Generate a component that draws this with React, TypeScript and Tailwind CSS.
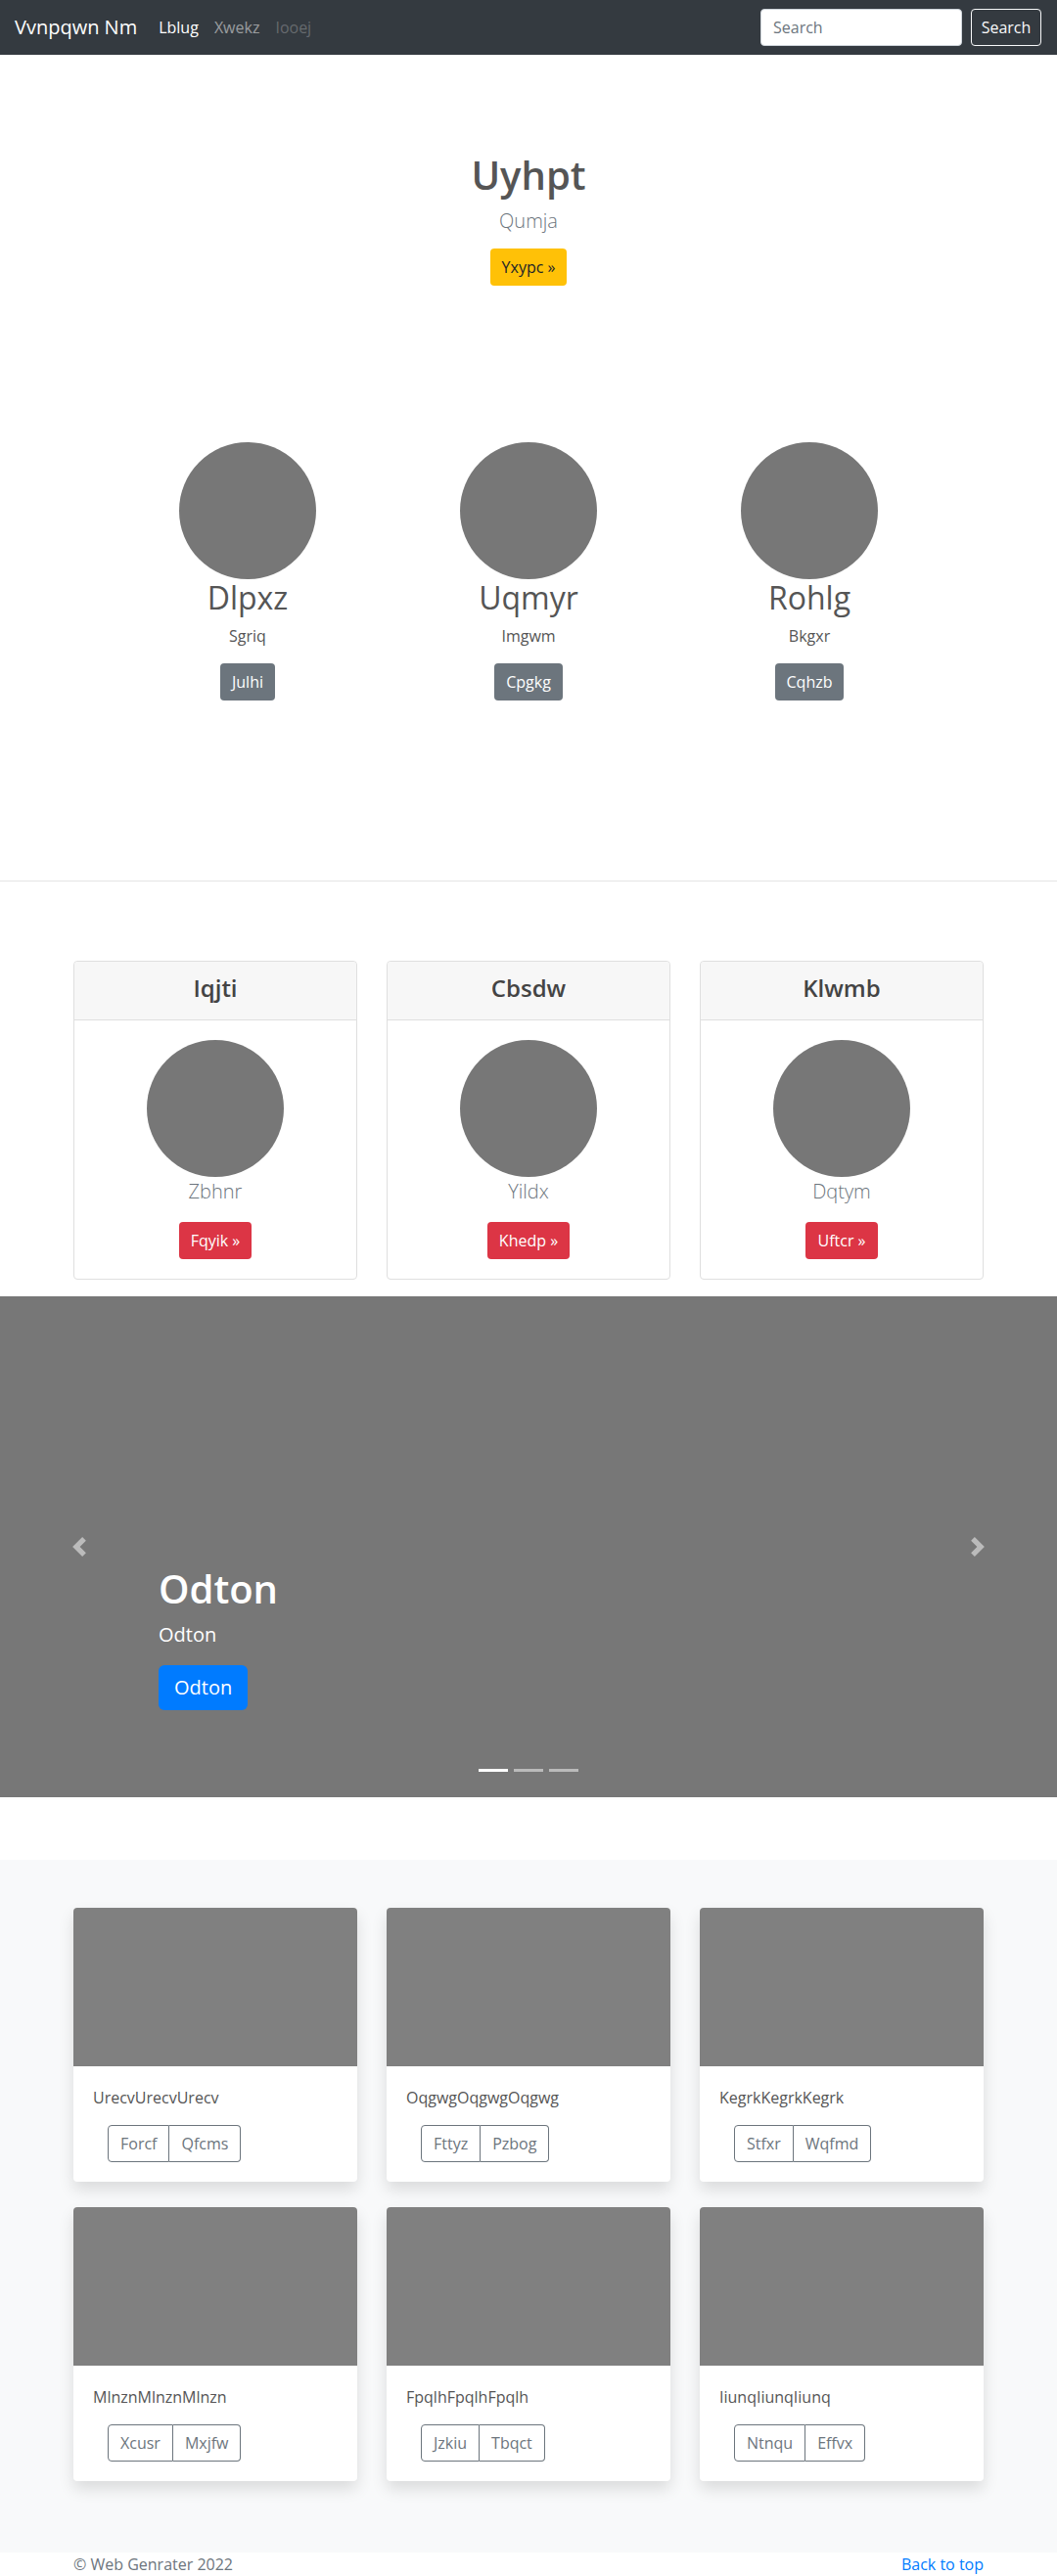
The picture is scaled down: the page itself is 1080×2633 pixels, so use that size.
import React from "react";

const circles = [
  { t: "Dlpxz", s: "Sgriq", b: "Julhi" },
  { t: "Uqmyr", s: "Imgwm", b: "Cpgkg" },
  { t: "Rohlg", s: "Bkgxr", b: "Cqhzb" },
];

const cards = [
  { h: "Iqjti", s: "Zbhnr", b: "Fqyik »" },
  { h: "Cbsdw", s: "Yildx", b: "Khedp »" },
  { h: "Klwmb", s: "Dqtym", b: "Uftcr »" },
];

const album = [
  { t: "UrecvUrecvUrecv", a: "Forcf", b: "Qfcms" },
  { t: "OqgwgOqgwgOqgwg", a: "Fttyz", b: "Pzbog" },
  { t: "KegrkKegrkKegrk", a: "Stfxr", b: "Wqfmd" },
  { t: "MlnznMlnznMlnzn", a: "Xcusr", b: "Mxjfw" },
  { t: "FpqlhFpqlhFpqlh", a: "Jzkiu", b: "Tbqct" },
  { t: "IiunqIiunqIiunq", a: "Ntnqu", b: "Effvx" },
];

export default function App() {
  return (
    <div className="bg-white text-[#212529] font-['Open_Sans','Noto_Sans',sans-serif] text-base leading-6">
      {/* Navbar */}
      <nav className="h-14 bg-[#343a40] flex items-center pl-[15px] pr-4">
        <span className="text-[20px] leading-[30px] text-white mr-[14px]">Vvnpqwn Nm</span>
        <div className="flex">
          <a className="px-2 text-white">Lblug</a>
          <a className="px-2 text-white/50">Xwekz</a>
          <a className="px-2 text-white/25">Iooej</a>
        </div>
        <div className="ml-auto flex items-center gap-[9px]">
          <input
            placeholder="Search"
            className="w-[206px] h-[38px] rounded bg-white px-3 border border-[#ced4da] text-[#495057] placeholder:text-[#6c757d] outline-none"
          />
          <button className="h-[38px] w-[72px] rounded border border-[#f8f9fa] text-[#f8f9fa]">Search</button>
        </div>
      </nav>

      {/* Hero */}
      <section className="pt-[99px] text-center">
        <h1 className="text-[40px] leading-[48px] font-semibold text-[#555] mb-2">Uyhpt</h1>
        <p className="text-[20px] leading-[30px] font-light text-[#6c757d] mb-[13px]">Qumja</p>
        <button className="h-[38px] px-3 rounded bg-[#ffc107] text-[#212529]">Yxypc »</button>
      </section>

      {/* Circles */}
      <div className="mt-[160px] w-[861px] mx-auto grid grid-cols-3 text-center">
        {circles.map((c) => (
          <div key={c.t} className="flex flex-col items-center">
            <div className="w-[140px] h-[140px] rounded-full bg-[#777]" />
            <h2 className="text-[32px] leading-[38px] font-normal text-[#555] mb-2">{c.t}</h2>
            <p className="text-[#555] mb-4">{c.s}</p>
            <button className="h-[38px] px-3 rounded bg-[#6c757d] text-white">{c.b}</button>
          </div>
        ))}
      </div>

      <hr className="mt-[184px] border-0 border-t border-[#e5e5e5]" />

      {/* Pricing-like cards */}
      <div className="mt-[81px] w-[930px] mx-auto grid grid-cols-3 gap-[30px] text-center">
        {cards.map((c) => (
          <div key={c.h} className="border border-[#dfdfdf] rounded">
            <div className="bg-[#f7f7f7] border-b border-[#dfdfdf] pt-3 pb-[18px] rounded-t">
              <h4 className="text-[24px] leading-[29px] font-semibold text-[#444]">{c.h}</h4>
            </div>
            <div className="p-5 flex flex-col items-center">
              <div className="w-[140px] h-[140px] rounded-full bg-[#777]" />
              <p className="text-[20px] leading-[30px] font-light text-[#6c757d] mb-4">{c.s}</p>
              <button className="h-[38px] px-3 rounded bg-[#dc3545] text-white">{c.b}</button>
            </div>
          </div>
        ))}
      </div>

      {/* Carousel */}
      <div className="mt-[17px] relative h-[512px] bg-[#777]">
        <svg className="absolute left-[71px] top-[246px] w-5 h-5 opacity-50" viewBox="0 0 8 8" fill="#fff">
          <path d="M5.25 0l-4 4 4 4 1.5-1.5L4.25 4l2.5-2.5L5.25 0z" />
        </svg>
        <svg className="absolute right-[71px] top-[246px] w-5 h-5 opacity-50" viewBox="0 0 8 8" fill="#fff">
          <path d="M2.75 0l-1.5 1.5L3.75 4l-2.5 2.5L2.75 8l4-4-4-4z" />
        </svg>
        <div className="absolute left-[162px] bottom-[89px] text-white">
          <h1 className="text-[40px] leading-[48px] font-semibold mb-2">Odton</h1>
          <p className="text-[20px] leading-[30px] mb-4">Odton</p>
          <button className="h-[46px] px-4 rounded-md bg-[#007bff] text-white text-[20px] leading-[30px]">Odton</button>
        </div>
        <div className="absolute left-0 right-0 bottom-[26px] flex justify-center gap-[6px]">
          <span className="block w-[30px] h-[3px] bg-white" />
          <span className="block w-[30px] h-[3px] bg-white/50" />
          <span className="block w-[30px] h-[3px] bg-white/50" />
        </div>
      </div>

      {/* Album */}
      <section className="mt-[64px] bg-[#f8f9fa] pt-[49px] pb-[73px]">
        <div className="w-[930px] mx-auto grid grid-cols-3 gap-x-[30px] gap-y-[26px]">
          {album.map((a) => (
            <div key={a.t} className="bg-white rounded overflow-hidden shadow-[0_8px_16px_rgba(0,0,0,0.12)]">
              <div className="h-[162px] bg-[#808080]" />
              <div className="p-5">
                <p className="text-[#555] mb-4">{a.t}</p>
                <div className="ml-[15px] inline-flex">
                  <button className="h-[38px] px-3 border border-[#6c757d] rounded-l text-[#6c757d]">{a.a}</button>
                  <button className="h-[38px] px-3 border border-l-0 border-[#6c757d] rounded-r text-[#6c757d]">{a.b}</button>
                </div>
              </div>
            </div>
          ))}
        </div>
      </section>

      {/* Footer */}
      <footer className="h-6">
        <div className="w-[930px] mx-auto flex justify-between text-[#6c757d]">
          <span>© Web Genrater 2022</span>
          <a className="text-[#007bff]">Back to top</a>
        </div>
      </footer>
    </div>
  );
}
